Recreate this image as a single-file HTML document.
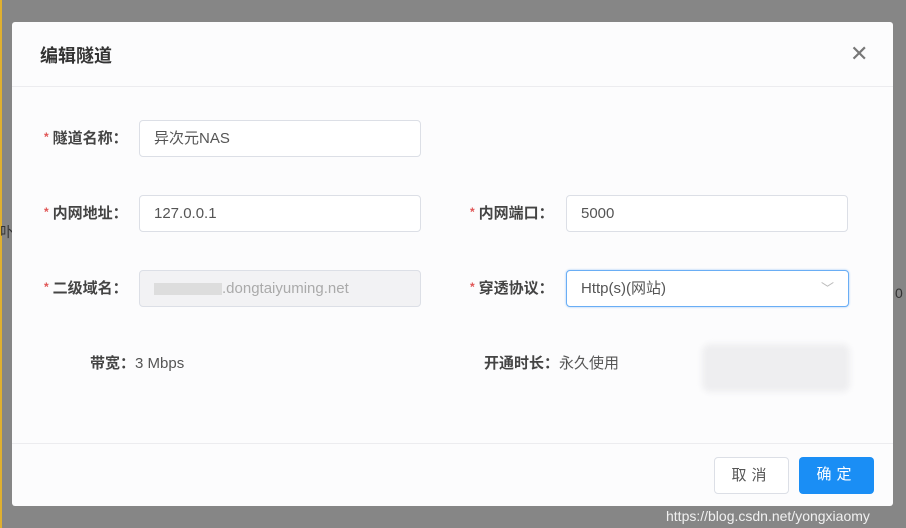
<!DOCTYPE html>
<html><head><meta charset="utf-8"><style>
*{margin:0;padding:0;box-sizing:border-box}
body{width:906px;height:528px;background:#868686;position:relative;overflow:hidden;font-family:"Liberation Sans","Noto Sans CJK SC",sans-serif;color:#555}
.ybar{position:absolute;left:0;top:0;width:2px;height:528px;background:#e0b030}
.modal{position:absolute;left:12px;top:22px;width:881px;height:484px;background:#fcfcfd;border-radius:3px}
.title{position:absolute;left:28px;top:20px;font-size:18px;font-weight:bold;color:#333}
.close{position:absolute;left:838px;top:20px;font-size:22px;color:#777;font-family:"DejaVu Sans",sans-serif;font-weight:200}
.hl{position:absolute;left:0;right:0;height:1px;background:#ececef}
.lbl{position:absolute;font-size:15px;color:#444;font-weight:bold;line-height:20px}
.lbl b{color:#e05555;font-size:12px;margin-right:4px;position:relative;top:-2px}
.inp{position:absolute;height:37px;border:1px solid #dcdfe6;border-radius:4px;background:#fff;font-size:15px;color:#555;padding:0 14px;line-height:35px}
.btn{position:absolute;height:37px;width:75px;border-radius:4px;font-size:15px;text-align:center;line-height:35px;letter-spacing:5px}
</style></head><body>
<div class="ybar"></div>
<div style="position:absolute;left:895px;top:285px;font-size:14px;color:#333">0</div>
<div style="position:absolute;left:0;top:222px;font-size:14px;color:#333">卟</div>
<div class="modal">
<div class="title">编辑隧道</div>
<div class="close">✕</div>
<div class="hl" style="top:64px"></div>
<div class="lbl" style="left:32px;top:107px"><b>*</b>隧道名称：</div>
<div class="inp" style="left:127px;top:98px;width:282px">异次元NAS</div>
<div class="lbl" style="left:32px;top:182px"><b>*</b>内网地址：</div>
<div class="inp" style="left:127px;top:173px;width:282px">127.0.0.1</div>
<div class="lbl" style="left:458px;top:182px"><b>*</b>内网端口：</div>
<div class="inp" style="left:554px;top:173px;width:282px">5000</div>
<div class="lbl" style="left:32px;top:257px"><b>*</b>二级域名：</div>
<div class="inp" style="left:127px;top:248px;width:282px;background:#f2f2f4;color:#aaa"><span style="display:inline-block;width:68px;height:12px;background:#ddd;vertical-align:middle"></span>.dongtaiyuming.net</div>
<div class="lbl" style="left:458px;top:257px"><b>*</b>穿透协议：</div>
<div class="inp" style="left:554px;top:248px;width:283px;border-color:#6aaef5;box-shadow:0 0 2px #9cc8f7">Http(s)(网站)<span style="position:absolute;right:14px;top:0;color:#bbb;font-size:13px">﹀</span></div>
<div class="lbl" style="left:78px;top:332px">带宽：<span style="font-weight:normal;color:#555">3 Mbps</span></div>
<div class="lbl" style="left:472px;top:332px">开通时长：<span style="font-weight:normal;color:#555">永久使用</span></div>
<div style="position:absolute;left:690px;top:322px;width:148px;height:48px;background:#eeeef0;border-radius:8px;filter:blur(3px)"></div>
<div class="hl" style="top:421px"></div>
<div class="btn" style="left:702px;top:435px;border:1px solid #dcdfe6;background:#fff;color:#555">取消</div>
<div class="btn" style="left:787px;top:435px;background:#1a8ef5;color:#fff">确定</div>
</div>
<div style="position:absolute;left:666px;top:508px;font-size:14px;color:#f0f0f0">https://blog.csdn.net/yongxiaomy</div>
</body></html>
